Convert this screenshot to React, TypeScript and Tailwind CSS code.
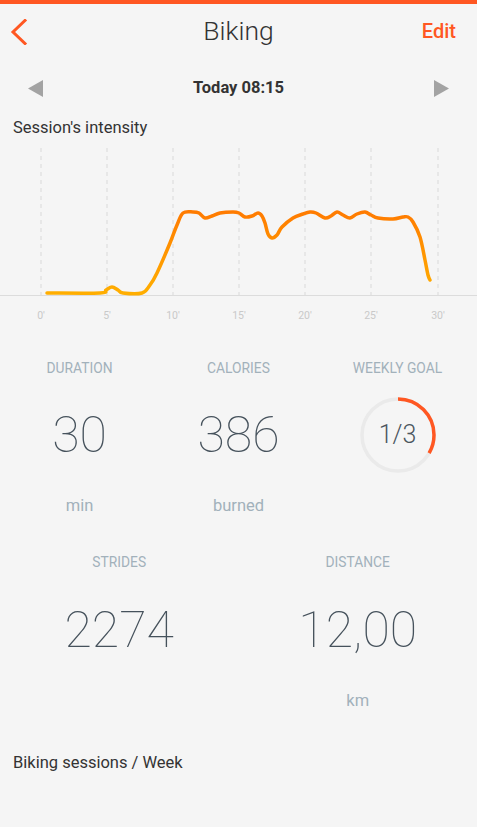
import React from 'react';

const ORANGE = '#ff5722';

// curve points in page coords, chart svg starts at y=138
const PTS: [number, number][] = [
  [47, 293], [100, 293], [106, 290], [112, 287], [118, 290], [123, 293], [142, 293],
  [150, 285], [157, 273], [170, 243], [177, 225], [183, 213], [193, 212], [199, 213],
  [205, 218], [212, 216], [220, 213], [233, 212], [239, 213], [245, 217], [252, 216],
  [258, 213], [262, 216], [265, 223], [268, 234], [272, 238], [277, 235], [282, 227],
  [293, 218], [303, 214], [310, 212], [316, 213], [325, 218], [331, 216], [337, 212],
  [343, 215], [350, 218], [357, 214], [365, 212], [371, 215], [378, 218], [393, 219],
  [403, 217], [408, 217], [413, 222], [420, 237], [425, 260], [428, 275], [430, 280],
];

function smoothPath(pts: [number, number][], top: number) {
  const p = pts.map(([x, y]) => [x, y - top]);
  let d = `M${p[0][0]},${p[0][1]}`;
  for (let i = 0; i < p.length - 1; i++) {
    const p0 = p[i - 1] || p[i];
    const p1 = p[i];
    const p2 = p[i + 1];
    const p3 = p[i + 2] || p2;
    const c1x = p1[0] + (p2[0] - p0[0]) / 6;
    const c1y = p1[1] + (p2[1] - p0[1]) / 6;
    const c2x = p2[0] - (p3[0] - p1[0]) / 6;
    const c2y = p2[1] - (p3[1] - p1[1]) / 6;
    d += ` C${c1x.toFixed(1)},${c1y.toFixed(1)} ${c2x.toFixed(1)},${c2y.toFixed(1)} ${p2[0]},${p2[1]}`;
  }
  return d;
}

function IntensityChart() {
  const lines = [41, 107, 173, 239, 305, 371, 438];
  const labels = ["0'", "5'", "10'", "15'", "20'", "25'", "30'"];
  return (
    <svg width="477" height="190" viewBox="0 0 477 190" className="block">
      <defs>
        <linearGradient id="curve" x1="0" y1="155" x2="0" y2="74" gradientUnits="userSpaceOnUse">
          <stop offset="0" stopColor="#ffae00" />
          <stop offset="1" stopColor="#ff7b00" />
        </linearGradient>
      </defs>
      {lines.map((x) => (
        <line key={x} x1={x} y1="10" x2={x} y2="157" stroke="#d9d9d9" strokeWidth="1" strokeDasharray="4 4" />
      ))}
      <line x1="0" y1="157.5" x2="477" y2="157.5" stroke="#dcdcdc" strokeWidth="1" />
      {lines.map((x, i) => (
        <text key={x} x={x} y="181" textAnchor="middle" fontSize="10.5" fill="#c9c9c9" fontFamily="Roboto, sans-serif">
          {labels[i]}
        </text>
      ))}
      <path d={smoothPath(PTS, 138)} fill="none" stroke="url(#curve)" strokeWidth="3.5" strokeLinecap="round" strokeLinejoin="round" />
    </svg>
  );
}

function GoalRing() {
  const r = 36;
  const c = 2 * Math.PI * r;
  return (
    <div className="relative w-[80px] h-[80px] shrink-0 flex items-center justify-center">
      <svg width="80" height="80" viewBox="0 0 80 80" className="absolute inset-0">
        <circle cx="40" cy="40" r={r} fill="none" stroke="#eaeaea" strokeWidth="3.5" />
        <circle
          cx="40"
          cy="40"
          r={r}
          fill="none"
          stroke={ORANGE}
          strokeWidth="3.5"
          strokeDasharray={`${c / 3} ${c}`}
          transform="rotate(-90 40 40)"
        />
      </svg>
      <span className="relative text-[25px] font-light text-[#4b5660]">1/3</span>
    </div>
  );
}

function Stat({ label, value, unit, ring }: { label: string; value?: string; unit?: string; ring?: boolean }) {
  return (
    <div className="flex flex-col items-center">
      <div className="h-[80px] flex items-center text-[13.8px] text-[#a2b1bb]">{label}</div>
      <div className="h-[54px] flex items-center justify-center">
        {ring ? <GoalRing /> : <span className="text-[50px] font-thin text-[#46525c] leading-none">{value}</span>}
      </div>
      <div className="h-[88px] flex items-center text-[16.5px] text-[#a2b1bb]">{unit}</div>
    </div>
  );
}

export default function App() {
  return (
    <div className="w-[477px] h-[827px] bg-[#f5f5f5] overflow-hidden font-['Roboto',sans-serif]">
      <div className="h-[4px] bg-[#ff5722]" />

      {/* header */}
      <div className="h-[54px] flex items-center justify-between px-[10px] relative">
        <svg width="18" height="26" viewBox="0 0 18 26" className="mt-[2px]">
          <path d="M15 1.5 L3 13 L15 24.5" fill="none" stroke={ORANGE} strokeWidth="3" strokeLinecap="square" />
        </svg>
        <div className="absolute left-0 right-0 text-center text-[26.5px] font-light text-[#333] pointer-events-none">Biking</div>
        <span className="text-[20px] font-medium text-[#ff5722] mr-[11px]">Edit</span>
      </div>

      {/* date row */}
      <div className="h-[60px] flex items-center justify-between px-[28px]">
        <svg width="16" height="17" viewBox="0 0 16 17">
          <path d="M15 0 L0 8.5 L15 17 Z" fill="#a3a3a3" />
        </svg>
        <span className="text-[16.5px] font-bold text-[#333]">Today 08:15</span>
        <svg width="16" height="17" viewBox="0 0 16 17">
          <path d="M1 0 L16 8.5 L1 17 Z" fill="#a3a3a3" />
        </svg>
      </div>

      <div className="h-[20px] flex items-center px-[13px] text-[16.5px] text-[#333]">Session's intensity</div>

      <IntensityChart />

      <div className="grid grid-cols-3">
        <Stat label="DURATION" value="30" unit="min" />
        <Stat label="CALORIES" value="386" unit="burned" />
        <Stat label="WEEKLY GOAL" ring />
      </div>

      <div className="grid grid-cols-2">
        <div className="flex flex-col items-center">
          <div className="h-[24px] flex items-center text-[13.8px] text-[#a2b1bb]">STRIDES</div>
          <div className="h-[112px] flex items-center text-[50px] font-thin text-[#46525c] leading-none">2274</div>
          <div className="h-[30px]" />
        </div>
        <div className="flex flex-col items-center">
          <div className="h-[24px] flex items-center text-[13.8px] text-[#a2b1bb]">DISTANCE</div>
          <div className="h-[112px] flex items-center text-[50px] font-thin text-[#46525c] leading-none">12,00</div>
          <div className="h-[30px] flex items-center text-[16.5px] text-[#a2b1bb]">km</div>
        </div>
      </div>

      <div className="h-[94px] flex items-center px-[13px] text-[16.5px] text-[#333]">Biking sessions / Week</div>
    </div>
  );
}
